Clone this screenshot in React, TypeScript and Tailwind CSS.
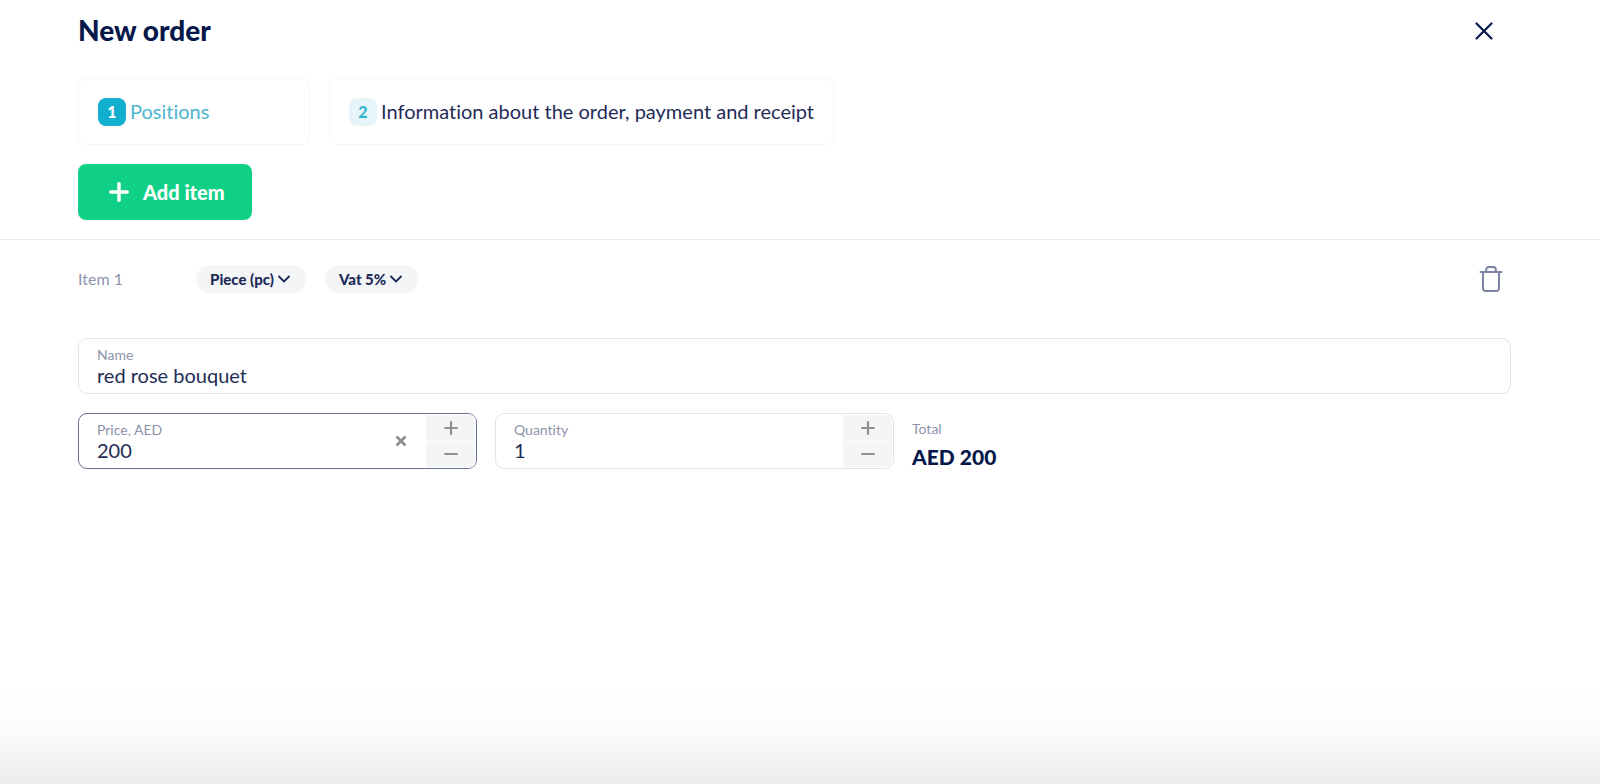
import { useState } from 'react'
import { Plus } from 'lucide-react'

type Unit = 'pc' | 'kg' | 'hour'

function TrashIcon() {
  return (
    <svg width="24" height="28" viewBox="0 0 24 28" fill="none" stroke="currentColor" strokeWidth="2" strokeLinecap="round" strokeLinejoin="round" aria-hidden="true">
      <path d="M1.500 7h21" />
      <path d="M7.200 6.500V4.500a2.500 2.500 0 0 1 2.500-2.500h4.600a2.500 2.500 0 0 1 2.500 2.500v2" />
      <path d="M4 7v16.500a2.500 2.500 0 0 0 2.500 2.500h11a2.500 2.500 0 0 0 2.500-2.500V7" />
    </svg>
  )
}

function Step({ n, label, active }: { n: number; label: string; active?: boolean }) {
  return (
    <button
      type="button"
      aria-current={active ? 'step' : undefined}
      className={`flex h-[67px] items-center gap-1 rounded-lg border border-[#f7f7f8] px-[19px] text-xl ${active ? 'w-58 text-[#4db5cf]' : 'text-[#1f2b57]'}`}
    >
      <span className={`flex size-7 shrink-0 items-center justify-center rounded-lg text-base font-black ${active ? 'bg-[#12aed0] text-white' : 'bg-[#e6f5fa] text-[#35b5d0]'}`}>{n}</span>
      <span className="pb-0.5">{label}</span>
    </button>
  )
}

function Pill({ label, value, options, onChange }: { label: string; value: string; options: { value: string; text: string }[]; onChange: (v: string) => void }) {
  return (
    <div className="relative">
      <select
        aria-label={label}
        value={value}
        onChange={e => onChange(e.target.value)}
        className="block h-7 appearance-none field-sizing-content rounded-full bg-[#f3f5f7] pr-8 pl-3.5 text-[15px] font-black text-[#1f2b57] outline-none"
      >
        {options.map(o => <option key={o.value} value={o.value}>{o.text}</option>)}
      </select>
      <svg width="12" height="8" viewBox="0 0 12 8" fill="none" stroke="currentColor" strokeWidth="1.800" strokeLinecap="round" strokeLinejoin="round" className="pointer-events-none absolute top-2.5 right-4 text-[#1f2b57]"><path d="M1 1.500l5 5 5-5" /></svg>
    </div>
  )
}

type NumberFieldProps = { id: string; label: string; value: number; active?: boolean; clearable?: boolean; onChange: (v: number) => void }

function NumberField({ id, label, value, active, clearable, onChange }: NumberFieldProps) {
  return (
    <div className={`flex h-14 w-full max-w-[399px] overflow-hidden rounded-[9px] border ${active ? 'border-[#66718f]' : 'border-[#e3e4e7]'}`}>
      <div className="flex min-w-0 flex-1 flex-col justify-center pt-0.5 pl-[18px]">
        <label htmlFor={id} className="text-sm leading-4 text-[#8c93a8]">{label}</label>
        <input
          id={id}
          inputMode="numeric"
          value={value}
          onChange={e => onChange(Number(e.target.value) || 0)}
          className="h-6 w-full text-xl text-[#1f2b57] outline-none"
        />
      </div>
      {clearable && (
        <button type="button" aria-label={`Clear ${label}`} onClick={() => onChange(0)} className="flex w-12 items-center justify-center text-[#8d8d8d]">
          <svg width="12" height="12" viewBox="0 0 12 12" fill="none" stroke="currentColor" strokeWidth="2.600"><path d="M1.500 1.500l9 9M10.500 1.500l-9 9" /></svg>
        </button>
      )}
      <div className="flex w-[51px] flex-col gap-px bg-white p-px">
        <button type="button" aria-label={`Increase ${label}`} onClick={() => onChange(value + 1)} className="flex flex-1 items-center justify-center bg-[#f4f5f6] text-[#8f8f8f]">
          <svg width="14" height="14" viewBox="0 0 14 14" fill="none" stroke="currentColor" strokeWidth="2.200" strokeLinecap="round"><path d="M7 1.100v11.800M1.100 7h11.800" /></svg>
        </button>
        <button type="button" aria-label={`Decrease ${label}`} onClick={() => onChange(Math.max(0, value - 1))} className="flex flex-1 items-center justify-center bg-[#f4f5f6] text-[#8f8f8f]">
          <svg width="14" height="14" viewBox="0 0 14 14" fill="none" stroke="currentColor" strokeWidth="2.200" strokeLinecap="round"><path d="M1.100 7h11.800" /></svg>
        </button>
      </div>
    </div>
  )
}

export default function App() {
  const [unit, setUnit] = useState<Unit>('pc')
  const [vat, setVat] = useState('5')
  const [name, setName] = useState('red rose bouquet')
  const [price, setPrice] = useState(200)
  const [quantity, setQuantity] = useState(1)

  return (
    <div className="flex min-h-screen flex-col bg-white font-['Lato',sans-serif] text-[#1f2b57] [font-variant-ligatures:none]">
      <header className="flex items-center justify-between pt-3 pr-[104px] pl-[78px]">
        <h1 className="text-[28px] leading-9 font-black text-[#06184a]">New order</h1>
        <button type="button" aria-label="Close" className="pt-0.5 text-[#06184a]">
          <svg width="24" height="24" viewBox="0 0 24 24" fill="none" stroke="currentColor" strokeWidth="2.200" strokeLinecap="round"><path d="M4.500 4.500l15 15M19.500 4.500l-15 15" /></svg>
        </button>
      </header>

      <nav className="mt-[30px] flex gap-[19px] px-[78px]">
        <Step n={1} label="Positions" active />
        <Step n={2} label="Information about the order, payment and receipt" />
      </nav>

      <div className="border-b border-[#ebebed] px-[78px] py-[19px]">
        <button type="button" className="flex h-14 items-center gap-2.5 rounded-lg bg-[#0fd086] px-[27px] text-xl font-black text-white">
          <Plus size={28} strokeWidth={3} />
          Add item
        </button>
      </div>

      <main className="pt-[25px] pr-[89px] pl-[78px]">
        <div className="flex items-center">
          <span className="w-[118px] text-base leading-7 text-[#8c93a8]">Item 1</span>
          <div className="flex gap-[19px]">
            <Pill
              label="Unit"
              value={unit}
              onChange={v => setUnit(v as Unit)}
              options={[{ value: 'pc', text: 'Piece (pc)' }, { value: 'kg', text: 'Kilogram (kg)' }, { value: 'hour', text: 'Hour (h)' }]}
            />
            <Pill
              label="Vat"
              value={vat}
              onChange={setVat}
              options={[{ value: '5', text: 'Vat 5%' }, { value: '0', text: 'Vat 0%' }]}
            />
          </div>
          <button type="button" aria-label="Delete item" className="mr-2 ml-auto text-[#7b84a0]">
            <TrashIcon />
          </button>
        </div>

        <div className="mt-[45px] flex h-14 flex-col justify-center rounded-[9px] border border-[#e3e4e7] px-[18px] pt-0.5">
          <label htmlFor="name" className="text-sm leading-4 text-[#8c93a8]">Name</label>
          <input id="name" value={name} onChange={e => setName(e.target.value)} className="h-6 w-full text-xl outline-none" />
        </div>

        <div className="mt-[19px] flex gap-[18px]">
          <NumberField id="price" label="Price, AED" value={price} onChange={setPrice} active clearable />
          <NumberField id="quantity" label="Quantity" value={quantity} onChange={setQuantity} />
          <div className="shrink-0 pt-2">
            <div className="text-sm leading-4 text-[#8c93a8]">Total</div>
            <div className="mt-1.5 text-[21px] leading-7 font-black text-[#06184a]">AED {price * quantity}</div>
          </div>
        </div>
      </main>

      {/* Bottom fade */}
      <div className="mt-auto h-24 bg-linear-to-b from-white via-[#fbfbfb] to-[#ececec]" />
    </div>
  )
}
